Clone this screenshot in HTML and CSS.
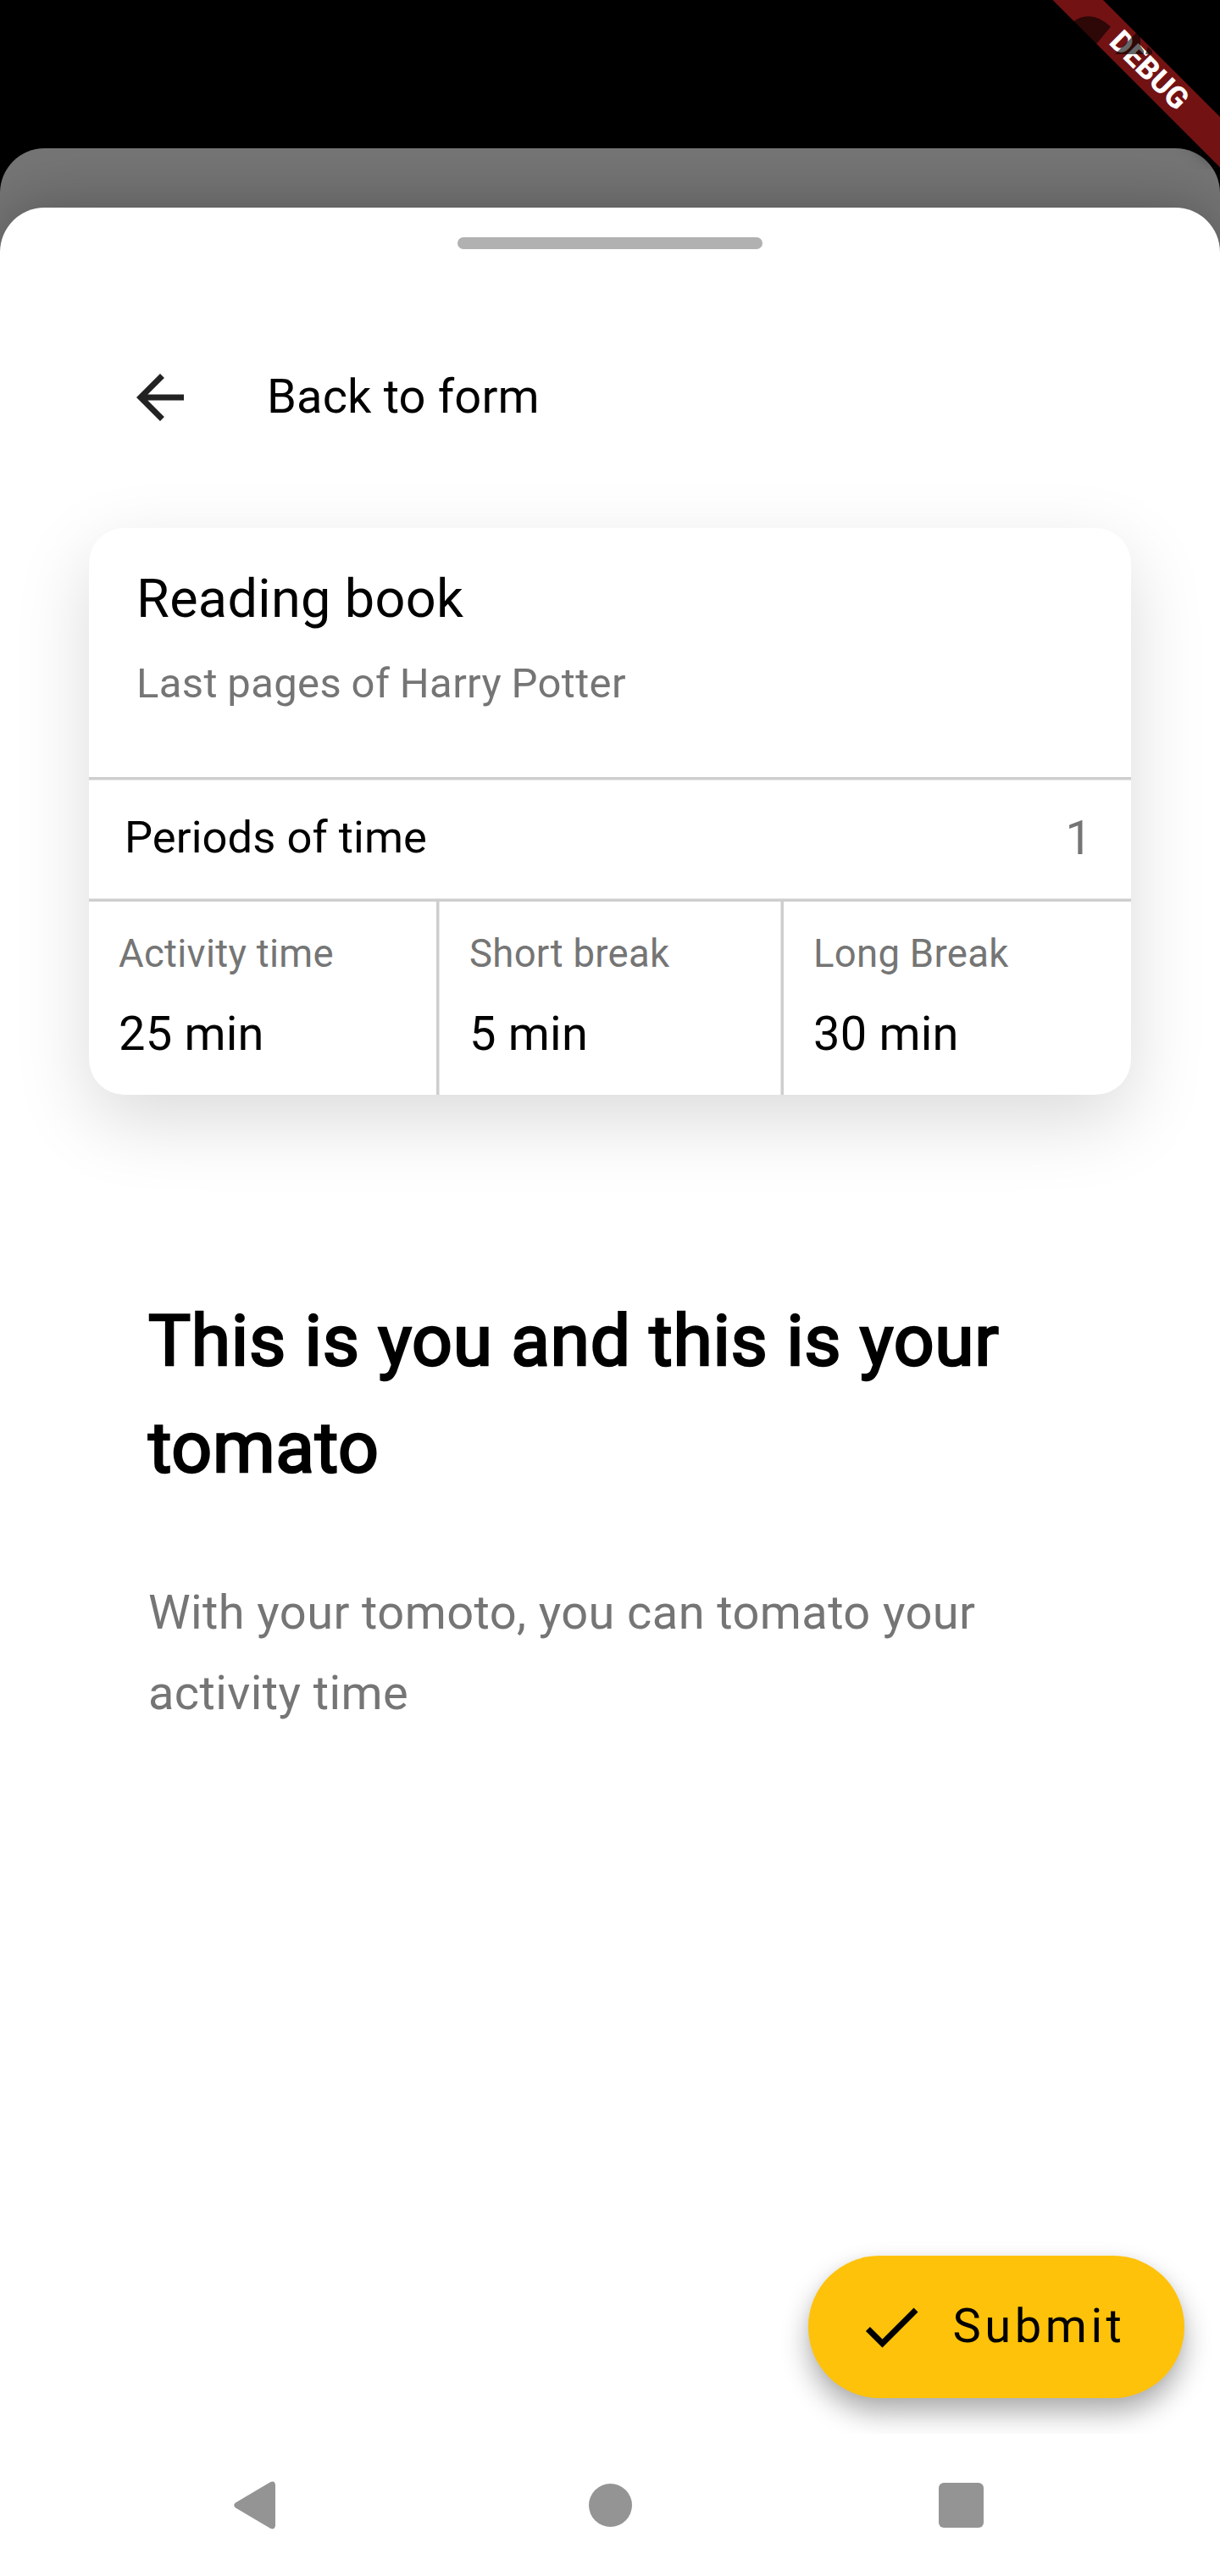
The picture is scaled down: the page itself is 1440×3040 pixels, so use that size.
FILE: index.html
```
<!DOCTYPE html>
<html lang="en">
<head>
<meta charset="utf-8">
<title>Back to form</title>
<link rel="stylesheet" href="styles.css">
</head>
<body>
<div class="screen">
  <div class="under-sheet">
    <main class="sheet">
      <div class="handle"></div>
      <header class="header">
        <svg class="icon" viewBox="0 0 24 24"><path fill="#222" d="M20 11H7.83l5.59-5.59L12 4l-8 8 8 8 1.41-1.41L7.83 13H20v-2z"/></svg>
        <span class="header-title">Back to form</span>
      </header>

      <section class="card">
        <div class="card-head">
          <h2 class="card-title">Reading book</h2>
          <p class="card-subtitle">Last pages of Harry Potter</p>
        </div>
        <div class="rule rule-top"></div>
        <div class="periods">
          <span class="periods-label">Periods of time</span>
          <span class="periods-value">1</span>
        </div>
        <div class="rule rule-bottom"></div>
        <div class="times">
          <div class="time">
            <div class="time-label">Activity time</div>
            <div class="time-value">25 min</div>
          </div>
          <div class="vrule vrule-left"></div>
          <div class="time">
            <div class="time-label">Short break</div>
            <div class="time-value">5 min</div>
          </div>
          <div class="vrule vrule-right"></div>
          <div class="time">
            <div class="time-label">Long Break</div>
            <div class="time-value">30 min</div>
          </div>
        </div>
      </section>

      <section class="intro">
        <h1 class="intro-title">This is you and this is your tomato</h1>
        <p class="intro-text">With your tomoto, you can tomato your activity time</p>
      </section>

      <button class="submit">
        <svg class="icon" viewBox="0 0 24 24"><path d="M9 16.17L4.83 12l-1.42 1.41L9 19 21 7l-1.41-1.41z"/></svg>
        <span class="submit-label">Submit</span>
      </button>

      <nav class="navbar">
        <svg class="nav-back" viewBox="0 0 49 57"><path fill="#949494" d="M2 25.500L43 1.200Q48.700-1 49 5V52Q48.700 58 43 55.800L2 31.500Q-1.500 28.500 2 25.500z"/></svg>
        <div class="nav-home"></div>
        <div class="nav-recent"></div>
      </nav>
    </main>
  </div>
  <svg class="banner" viewBox="0 0 200 200">
    <path class="ribbon" d="M2.500 0H62L200 138V197.500z"/>
    <text class="ribbon-text" transform="translate(67.700 51.100) rotate(45)">DEBUG</text>
    <path fill="rgba(0,0,0,.6)" d="M19 31.500Q45 7 71 31.500L45 63z"/>
    <path fill="rgba(0,0,0,.6)" d="M76 64L106 34V54l4 6v4zM115 55l5 5v4h-8z"/>
  </svg>
</div>
</body>
</html>
```
FILE: styles.css
```
* { box-sizing: border-box; }

body {
  margin: 0;
  background: #000;
  color: #000;
  font-family: Roboto, "Liberation Sans", sans-serif;
}

h1, h2, p { margin: 0; font-weight: 400; }

.screen {
  position: relative;
  width: 1440px;
  height: 3040px;
  padding-top: 175px;
  overflow: hidden;
}

.under-sheet {
  height: 2865px;
  padding-top: 70px;
  border-radius: 52.5px 52.5px 0 0;
  background: #757575;
  overflow: hidden;
}

.sheet {
  display: flex;
  flex-direction: column;
  height: 2795px;
  padding-top: 35px;
  border-radius: 52.5px 52.5px 0 0;
  background: #fff;
  box-shadow: 0 0 70px rgba(0, 0, 0, .27);
  overflow: hidden;
}

.handle {
  align-self: center;
  width: 360px;
  height: 14px;
  border-radius: 7px;
  background: #b1b1b1;
}

.icon { display: block; width: 84px; height: 84px; }

.header {
  display: flex;
  gap: 84px;
  height: 84px;
  margin-top: 133px;
  padding-left: 147px;
}

.header-title { font-size: 56px; line-height: 82px; letter-spacing: .15px; }

.card {
  width: 1230px;
  margin: 112px 0 0 105px;
  border-radius: 42px;
  background: #fff;
  box-shadow: 0 30px 88px rgba(0, 0, 0, .145);
}

.card-head { height: 294px; padding: 42px 56px 0; }
.card-title { font-size: 63px; line-height: 84px; letter-spacing: .32px; }
.card-subtitle { margin-top: 20px; font-size: 49px; line-height: 75px; letter-spacing: .36px; word-spacing: -1px; color: #757575; }

.rule { height: 4px; background: #cecece; }
.rule-top { border-bottom: 1px solid #e6e6e6; }
.rule-bottom { border-top: 1px solid #e6e6e6; }

.periods {
  display: flex;
  align-items: center;
  justify-content: space-between;
  height: 139px;
  padding: 0 46px 3px 42px;
}
.periods-label { padding-bottom: 2px; font-size: 52.5px; letter-spacing: .07px; }
.periods-value { font-size: 56px; color: #757575; }

.times {
  display: grid;
  grid-template-columns: 410px 4px 402px 4px 410px;
  height: 228px;
}
.time { padding: 27px 0 0 35px; }
.time-label { font-size: 45.5px; line-height: 69px; letter-spacing: .28px; color: #757575; }
.time-value { margin-top: 18px; font-size: 56px; line-height: 84px; letter-spacing: .2px; }
.vrule { background: #cecece; }
.vrule-left { border-right: 1px solid #e6e6e6; }
.vrule-right { border-left: 1px solid #e6e6e6; }

.intro { width: 1265px; margin-top: 228px; padding-left: 175px; }
.intro-title {
  font-size: 84px;
  line-height: 126px;
  letter-spacing: .7px;
  -webkit-text-stroke: 2.6px #000;
}
.intro-text {
  margin-top: 83.5px;
  font-size: 56px;
  line-height: 95.2px;
  letter-spacing: .4px;
  color: #757575;
}

.submit {
  display: flex;
  align-items: center;
  align-self: flex-end;
  gap: 31px;
  width: 444.5px;
  height: 168px;
  margin: auto 42px 42px 0;
  padding: 0 0 0 56px;
  border: 0;
  border-radius: 84px;
  background: #ffc20a;
  color: #000;
  font-family: inherit;
  box-shadow: 0 17px 32px rgba(0, 0, 0, .32), 0 0 12px rgba(0, 0, 0, .04);
}
.submit-label { font-size: 56px; line-height: 84px; padding-bottom: 2px; letter-spacing: 4.550px; }

.navbar {
  position: relative;
  display: flex;
  align-items: center;
  flex: none;
  height: 168px;
  padding-left: 276px;
  background: #fff;
}
.nav-back { width: 49px; height: 57px; }
.nav-home { width: 51px; height: 51px; margin-left: 369.5px; border-radius: 50%; background: #949494; }
.nav-recent { width: 53px; height: 53px; margin-left: 362px; border-radius: 6px; background: #949494; }

/* Ribbon lies over the top right corner */
.banner { position: absolute; top: 0; right: 0; width: 200px; height: 200px; }
.ribbon { fill: #731213; filter: drop-shadow(0 0 10px rgba(0, 0, 0, .5)); }
.ribbon-text { fill: #fff; font-size: 35.7px; font-weight: 800; }
```
